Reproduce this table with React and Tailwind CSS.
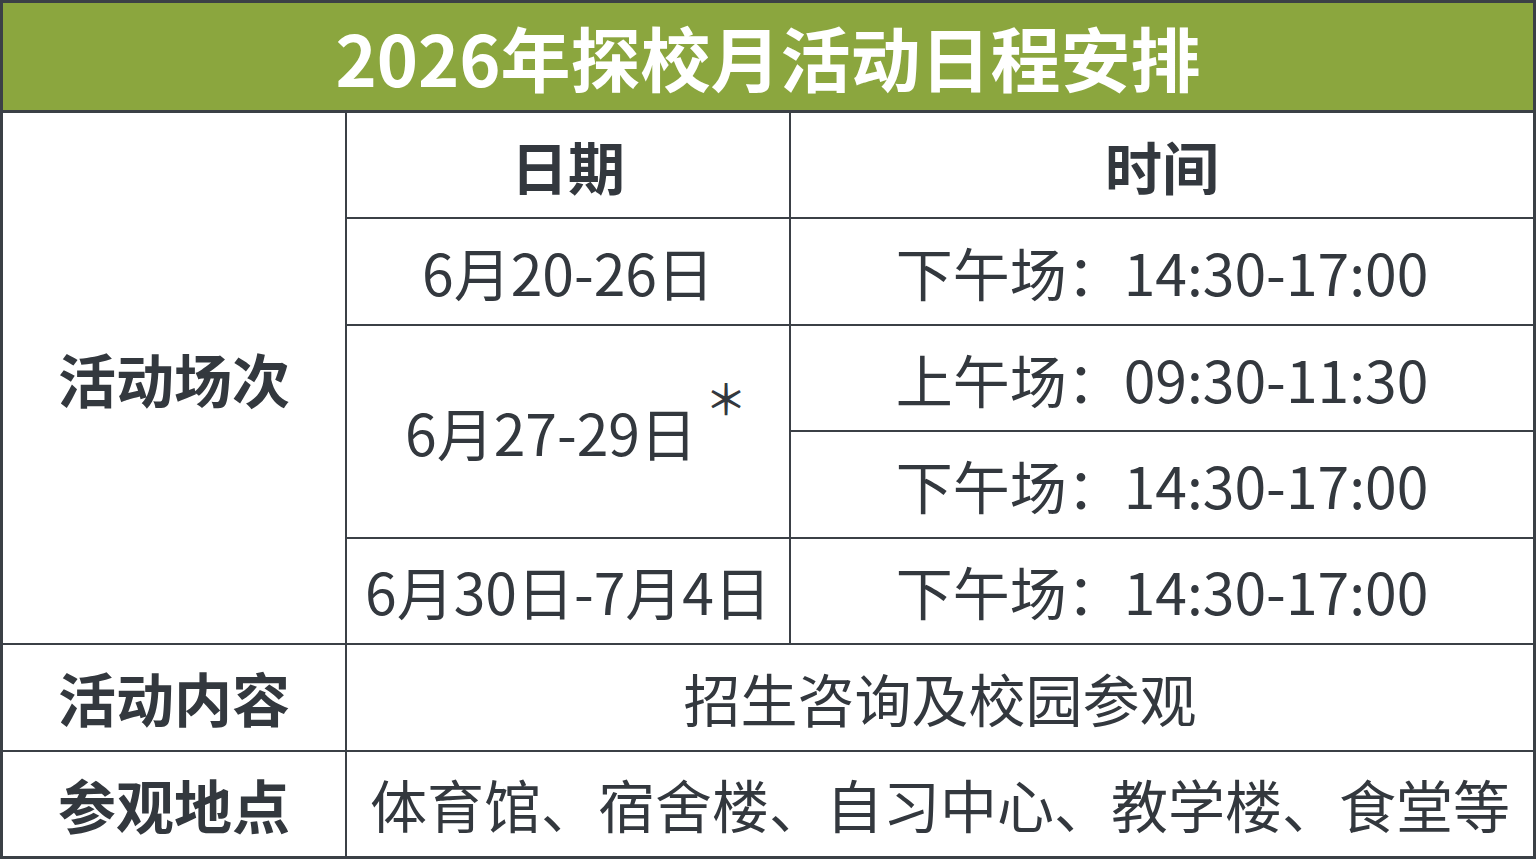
const font = { fontFamily: '"Noto Sans CJK SC", "Noto Sans", sans-serif' };

function Cell({ className = "", children }) {
  return (
    <div className={`bg-white flex items-center justify-center text-[#33383e] ${className}`}>
      {children}
    </div>
  );
}

export default function App() {
  return (
    <div
      className="w-[1536px] h-[859px] border-[3px] border-[#3b4046] bg-[#3b4046] flex flex-col overflow-hidden"
      style={font}
    >
      <div className="h-[107px] shrink-0 bg-[#8ba63e] flex items-center justify-center text-white font-bold text-[70px] leading-none">
        2026年探校月活动日程安排
      </div>
      <div className="h-[3px] shrink-0 bg-[#3b4046]" />
      <div className="flex-1 grid grid-cols-[342px_442px_1fr] grid-rows-7 gap-[2px] text-[57px] leading-none">
        <Cell className="row-span-5 font-bold text-[58px]">活动场次</Cell>
        <Cell className="font-bold">日期</Cell>
        <Cell className="font-bold">时间</Cell>

        <Cell>6月20-26日</Cell>
        <Cell>下午场：14:30-17:00</Cell>

        <Cell className="row-span-2">
          <span>6月27-29日</span>
          <span className="relative -top-[34px] w-[34px] shrink-0 whitespace-nowrap pl-[8px] text-[42px] font-medium">
            ＊
          </span>
        </Cell>
        <Cell>上午场：09:30-11:30</Cell>
        <Cell>下午场：14:30-17:00</Cell>

        <Cell>6月30日-7月4日</Cell>
        <Cell>下午场：14:30-17:00</Cell>

        <Cell className="font-bold text-[58px]">活动内容</Cell>
        <Cell className="col-span-2">招生咨询及校园参观</Cell>

        <Cell className="font-bold text-[58px]">参观地点</Cell>
        <Cell className="col-span-2">体育馆、宿舍楼、自习中心、教学楼、食堂等</Cell>
      </div>
    </div>
  );
}
